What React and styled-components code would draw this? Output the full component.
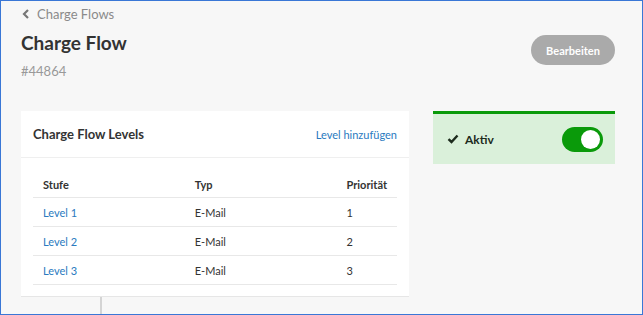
import React, { useState } from 'react';
import styled, { createGlobalStyle } from 'styled-components';

const GlobalStyle = createGlobalStyle`
  html, body {
    margin: 0;
    padding: 0;
    background: #f7f7f7;
  }
  body {
    font-family: Lato, "Open Sans", sans-serif;
  }
`;

const levels = [
  { name: 'Level 1', type: 'E-Mail', priority: 1 },
  { name: 'Level 2', type: 'E-Mail', priority: 2 },
  { name: 'Level 3', type: 'E-Mail', priority: 3 },
];

const App = () => {
  const [active, setActive] = useState(true);

  return (
    <>
      <GlobalStyle />
      <Page>
        <Breadcrumb href="#">
          <svg width="8" height="10" viewBox="0 0 8 10">
            <path d="M6 1 L2 5 L6 9" fill="none" stroke="#777" strokeWidth="2.2" />
          </svg>
          Charge Flows
        </Breadcrumb>
        <HeaderRow>
          <div>
            <Title>Charge Flow</Title>
            <FlowId>#44864</FlowId>
          </div>
          <EditButton>Bearbeiten</EditButton>
        </HeaderRow>
        <Content>
          <LeftColumn>
            <Card>
              <CardHeader>
                <CardTitle>Charge Flow Levels</CardTitle>
                <Link href="#">Level hinzufügen</Link>
              </CardHeader>
              <TableWrap>
                <Table>
                  <thead>
                    <tr>
                      <Th>Stufe</Th>
                      <Th>Typ</Th>
                      <Th>Priorität</Th>
                    </tr>
                  </thead>
                  <tbody>
                    {levels.map((l) => (
                      <tr key={l.name}>
                        <Td><Link href="#">{l.name}</Link></Td>
                        <Td>{l.type}</Td>
                        <Td>{l.priority}</Td>
                      </tr>
                    ))}
                  </tbody>
                </Table>
              </TableWrap>
            </Card>
            <Connector />
          </LeftColumn>
          <StatusPanel>
            <StatusLabel>
              <svg width="12" height="10" viewBox="0 0 12 10">
                <path d="M1.5 5.2 L4.5 8 L10.5 1.5" fill="none" stroke="#1d2b1d" strokeWidth="2.4" />
              </svg>
              Aktiv
            </StatusLabel>
            <Toggle $on={active} onClick={() => setActive(!active)}>
              <Knob $on={active} />
            </Toggle>
          </StatusPanel>
        </Content>
      </Page>
    </>
  );
};

const Page = styled.div`
  box-sizing: border-box;
  height: 315px;
  border: 1px solid #3a77d6;
  padding: 5px 27px 0 20px;
  overflow: hidden;
  display: flex;
  flex-direction: column;
`;

const Breadcrumb = styled.a`
  display: flex;
  align-items: center;
  gap: 7px;
  font-size: 13px;
  color: #8a8a8a;
  text-decoration: none;
  height: 16px;
  padding-left: 1px;
`;

const HeaderRow = styled.div`
  display: flex;
  justify-content: space-between;
  align-items: flex-start;
  margin-top: 10px;
`;

const Title = styled.h1`
  margin: 0;
  font-size: 19px;
  font-weight: 700;
  color: #333;
  line-height: 22px;
`;

const FlowId = styled.div`
  margin-top: 9px;
  font-size: 13px;
  color: #999;
  line-height: 16px;
`;

const EditButton = styled.button`
  width: 84px;
  height: 30px;
  margin-top: 3px;
  border: none;
  border-radius: 15px;
  background: #aaaaaa;
  color: #fff;
  font-family: inherit;
  font-size: 11px;
  font-weight: 700;
  cursor: pointer;
`;

const Content = styled.div`
  display: flex;
  gap: 24px;
  margin-top: 32px;
  flex: 1;
  align-items: flex-start;
`;

const LeftColumn = styled.div`
  display: flex;
  flex-direction: column;
  width: 388px;
  align-self: stretch;
`;

const Card = styled.div`
  background: #fff;
  border-bottom: 1px solid #e6e6e6;
`;

const CardHeader = styled.div`
  display: flex;
  justify-content: space-between;
  align-items: center;
  height: 46px;
  padding: 0 12px;
  border-bottom: 1px solid #efefef;
`;

const CardTitle = styled.h2`
  margin: 0;
  font-size: 13px;
  font-weight: 700;
  color: #333;
`;

const Link = styled.a`
  color: #2a7ac0;
  font-size: 11px;
  text-decoration: none;
`;

const TableWrap = styled.div`
  padding: 13px 12px 11px;
`;

const Table = styled.table`
  width: 100%;
  border-collapse: collapse;
  font-size: 11px;
  color: #333;

  th:nth-child(1), td:nth-child(1) { width: 153px; }
  th:nth-child(2), td:nth-child(2) { width: 154px; }
`;

const Th = styled.th`
  text-align: left;
  font-weight: 700;
  padding: 0 10px;
  height: 26px;
  vertical-align: middle;
  border-bottom: 1px solid #e8e8e8;
`;

const Td = styled.td`
  padding: 0 10px;
  height: 28px;
  border-bottom: 1px solid #e8e8e8;
`;

const Connector = styled.div`
  width: 2px;
  flex: 1;
  margin-left: 79px;
  background: #d4d4d4;
`;

const StatusPanel = styled.div`
  width: 182px;
  height: 53px;
  box-sizing: border-box;
  border-top: 3px solid #0a9a0a;
  background: #daf0da;
  display: flex;
  align-items: center;
  justify-content: space-between;
  padding: 0 12px 0 14px;
`;

const StatusLabel = styled.div`
  display: flex;
  align-items: center;
  gap: 6px;
  font-size: 12px;
  font-weight: 700;
  color: #1d2b1d;
`;

const Toggle = styled.button`
  position: relative;
  width: 41px;
  height: 25px;
  border: none;
  padding: 0;
  border-radius: 13px;
  background: ${(p) => (p.$on ? '#0a9a0a' : '#bbb')};
  cursor: pointer;
`;

const Knob = styled.span`
  position: absolute;
  top: 3px;
  left: ${(p) => (p.$on ? '19px' : '3px')};
  width: 19px;
  height: 19px;
  border-radius: 50%;
  background: #fff;
`;

export default App;
